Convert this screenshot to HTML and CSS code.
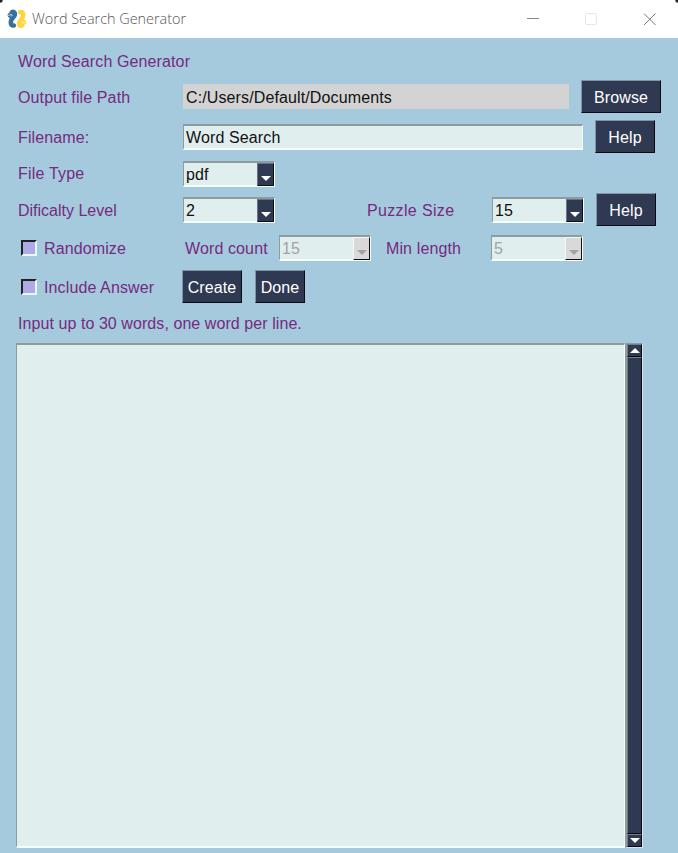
FILE: index.html
```html
<!DOCTYPE html>
<html lang="en">
<head>
<meta charset="utf-8">
<title>Word Search Generator</title>
<link rel="stylesheet" href="styles.css">
</head>
<body>
<div class="window">
  <header class="titlebar">
    <svg class="logo" width="20" height="20" viewBox="0 0 20 20">
      <g fill="none" stroke-linecap="round" stroke-linejoin="round">
        <g stroke="#3470a2">
          <path d="M4.800 3.500C6.500 2 8.300 3.500 7.800 5.800C7.200 8.500 3.800 9.800 3.800 13C3.800 15.800 5 16.800 6.800 16.500" stroke-width="4.600"/>
          <path d="M2.200 5.500C1.500 7.500 3.500 8 5 7" stroke-width="2.800"/>
        </g>
        <g stroke="#fed43f" transform="rotate(180 10 9.800)">
          <path d="M4.800 3.500C6.500 2 8.300 3.500 7.800 5.800C7.200 8.500 3.800 9.800 3.800 13C3.800 15.800 5 16.800 6.800 16.500" stroke-width="4.600"/>
          <path d="M2.200 5.500C1.500 7.500 3.500 8 5 7" stroke-width="2.800"/>
        </g>
        <path d="M1.200 6.300C2.500 7 3 5.300 4.500 5.600C5.700 6 5.200 7.400 4.200 7.100M18.800 13.300C17.500 12.600 17 14.300 15.500 14C14.300 13.600 14.800 12.200 15.800 12.500" stroke="#fff" stroke-width=".7"/>
      </g>
    </svg>
    <span class="caption">Word Search Generator</span>
    <svg class="controls" width="130" height="16" viewBox="0 0 130 16">
      <path d="M1 7.500H13" stroke="#888"/>
      <rect x="59.500" y="2.500" width="11" height="11" rx="1" fill="none" stroke="#e6e6e6"/>
      <path d="M118 2.500L129.500 14M129.500 2.500L118 14" stroke="#777" stroke-width="1"/>
    </svg>
  </header>
  <main class="form">
    <div class="row row-heading"><span class="label">Word Search Generator</span></div>
    <div class="row row-path">
      <span class="label first">Output file Path</span>
      <span class="path">C:/Users/Default/Documents</span>
      <button class="btn browse">Browse</button>
    </div>
    <div class="row row-name">
      <span class="label first">Filename:</span>
      <span class="field filename">Word Search</span>
      <button class="btn help">Help</button>
    </div>
    <div class="row row-type">
      <span class="label first type">File Type</span>
      <span class="field combo"><span>pdf</span><i class="drop"></i></span>
    </div>
    <div class="row row-level">
      <span class="label first level">Dificalty Level</span>
      <span class="field combo"><span>2</span><i class="drop"></i></span>
      <span class="label size">Puzzle Size</span>
      <span class="field combo"><span>15</span><i class="drop"></i></span>
      <button class="btn help">Help</button>
    </div>
    <div class="row row-random">
      <i class="check"></i><span class="label option">Randomize</span>
      <span class="label count">Word count</span>
      <span class="field combo disabled"><span>15</span><i class="drop"></i></span>
      <span class="label minimum">Min length</span>
      <span class="field combo disabled"><span>5</span><i class="drop"></i></span>
    </div>
    <div class="row row-actions">
      <i class="check"></i><span class="label option answer">Include Answer</span>
      <button class="btn create">Create</button>
      <button class="btn done">Done</button>
    </div>
    <div class="row row-hint"><span class="label hint">Input up to 30 words, one word per line.</span></div>
    <div class="editor">
      <div class="words"></div>
      <div class="scroll">
        <i class="arrow up"></i><i class="thumb"></i><i class="arrow down"></i>
      </div>
    </div>
  </main>
</div>
</body>
</html>
```
FILE: styles.css
```css
* { box-sizing: border-box; }
body { margin: 0; background: #a5c9dd; }
.window {
  width: 678px;
  height: 853px;
  overflow: hidden;
  font: 16px/20px "Liberation Sans", Arial, sans-serif;
  letter-spacing: .12px;
  color: #111;
}
.titlebar {
  display: flex;
  align-items: center;
  height: 38px;
  padding: 0 22px 0 7px;
  background: radial-gradient(circle at 0 0, #222 2px, transparent 3.500px), radial-gradient(circle at 100% 0, #222 2px, transparent 3.500px), #fff;
}
.logo { margin-top: -1px; }
.caption {
  margin-left: 5px;
  font: 300 14.400px/20px "Open Sans", "Noto Sans", sans-serif;
  letter-spacing: 0;
  color: #555;
}
.controls { margin-left: auto; }
.form { padding-top: 7px; }
.row { display: flex; align-items: center; padding-left: 18px; white-space: nowrap; }
.row-heading { height: 32px; margin-bottom: 3px; }
.row-path, .row-name { height: 33px; margin-bottom: 7px; }
.row-type { height: 27px; margin-bottom: 6px; }
.row-level { height: 33px; margin-bottom: 9px; }
.row-random { height: 26px; margin-bottom: 9px; padding-left: 21px; }
.row-actions { height: 33px; margin-bottom: 8px; padding-left: 21px; }
.row-hint { height: 26px; margin-bottom: 6px; }
.label { padding-top: 2px; color: #752b80; }
.first { width: 165px; }
.type { padding-top: 1px; letter-spacing: .2px; }
.level { letter-spacing: 0; }
.hint { padding-top: 0; letter-spacing: .07px; }
.path { width: 386px; height: 25px; padding: 4px 3px 0; background: #d3d3d3; }
.field {
  width: 92px;
  height: 26px;
  padding: 2px 0 0 2px;
  background: #e0eeee;
  border: 2px solid;
  border-color: #8e9c9f #f4ffff #f4ffff #8e9c9f;
  border-width: 2px 1px 2px 1px;
}
.filename { width: 400px; }
.combo { display: flex; padding: 0 0 0 2px; line-height: 23px; }
.drop {
  display: flex;
  justify-content: center;
  width: 17px;
  height: 23px;
  margin-left: auto;
  padding-top: 12px;
  background: #303952;
  border: 1px solid;
  border-color: #6a7285 #0b0e17 #0b0e17 #6a7285;
}
.drop::after { content: ""; width: 0; height: 0; border: 5px solid transparent; border-top-color: #fff; border-bottom: 0; }
.disabled { color: #a3a3a3; }
.disabled .drop { background: #d9d9d9; border-color: #f7f7f7 #111 #111 #f7f7f7; }
.disabled .drop::after { border-top-color: #a3a3a3; }
.btn {
  height: 33px;
  padding: 2px 0 0;
  border: 1px solid;
  border-color: #8293a4 #080b12 #080b12 #8293a4;
  background: #303952;
  color: #fff;
  font: inherit;
  letter-spacing: inherit;
}
.browse { width: 80px; margin-left: 12px; }
.help { width: 60px; margin-left: 12px; }
.create { width: 60px; }
.done { width: 50px; margin-left: 13px; }
.size { width: 125px; margin-left: 92px; letter-spacing: .35px; }
.check {
  width: 16px;
  height: 16px;
  background: #b0a9e7;
  border: 2px solid;
  border-color: #222 #e8f8fb #e8f8fb #222;
}
.option { width: 141px; margin-left: 7px; }
.answer { width: 138px; }
.count { width: 94px; }
.minimum { width: 105px; margin-left: 15px; }
.editor { display: flex; width: 627px; height: 505px; margin-left: 16px; }
.words {
  width: 609px;
  background: #e0eeee;
  border: 1px solid;
  border-width: 2px 1px 2px 1px;
  border-color: #8e9c9f #f4ffff #f4ffff #8e9c9f;
}
.scroll {
  display: flex;
  flex-direction: column;
  width: 18px;
  background: #303952;
  border: 1px solid;
  border-width: 1px 1px 1px 2px;
  border-color: #8e9c9f #d8e6ea #d8e6ea #8e9c9f;
}
.arrow, .thumb { border: 1px solid; border-color: #747c8c #070a11 #070a11 #747c8c; background: #303952; }
.arrow { display: flex; align-items: center; justify-content: center; height: 13px; }
.arrow::after { content: ""; border: 5px solid transparent; }
.up::after { border-bottom-color: #fff; border-top: 0; }
.down::after { border-top-color: #fff; border-bottom: 0; }
.thumb { flex: 1; }
```
